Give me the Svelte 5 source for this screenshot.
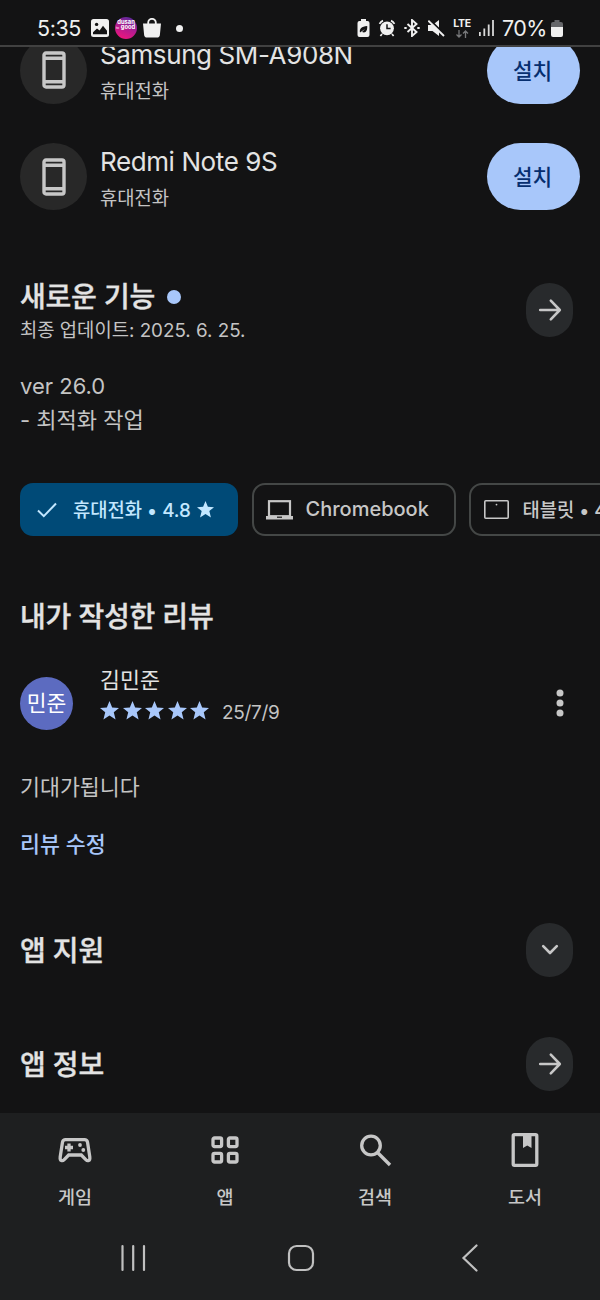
<script lang="ts">
	const devices = [
		{ name: 'Samsung SM-A908N', kind: '휴대전화' },
		{ name: 'Redmi Note 9S', kind: '휴대전화' }
	];

	const tabs = [
		{ id: 'games', label: '게임' },
		{ id: 'apps', label: '앱' },
		{ id: 'search', label: '검색' },
		{ id: 'books', label: '도서' }
	];

	const review = { author: '김민준', initials: '민준', rating: 5, date: '25/7/9', text: '기대가됩니다' };
</script>

{#snippet star(size: number)}
	<svg class="star" width={size} height={size} viewBox="0 0 20 20">
		<path d="M10 0l2.8 6.9 7.200.4-5.500 4.600 1.900 7.500L10 15.200l-6.400 4.200 1.900-7.500L0 7.300l7.200-.4z" />
	</svg>
{/snippet}

{#snippet arrow()}
	<svg class="line" width="24" height="24" viewBox="0 0 24 24">
		<path d="M2.2 12h19M12.8 2.700L21.800 12l-9 9.300" />
	</svg>
{/snippet}

<div class="screen">
	<header class="status">
		<span class="clock">5:35</span>
		<div class="notifications">
			<svg width="18" height="18" viewBox="0 0 18 18">
				<rect width="18" height="18" rx="2.5" fill="#f0f0f0" />
				<circle cx="5.6" cy="5.4" r="1.7" fill="#131314" />
				<path d="M2 13.2l4-3.6 2.6 2 3.4-4.8 4 5v3.5H2z" fill="#131314" />
			</svg>
			<svg width="22" height="22" viewBox="0 0 22 22">
				<defs>
					<linearGradient id="badge" x1="0.7" y1="0" x2="0.3" y2="1">
						<stop offset="0" stop-color="#5b2a9a" />
						<stop offset="0.5" stop-color="#b01c90" />
						<stop offset="1" stop-color="#f0157c" />
					</linearGradient>
				</defs>
				<circle cx="11" cy="11" r="11" fill="url(#badge)" />
				<text class="logo-text" x="11" y="7.2" text-anchor="middle">dusan</text>
				<text class="logo-text" x="13" y="12.2" text-anchor="middle">good</text>
				<text class="logo-tiny" x="1" y="11.500">to</text>
			</svg>
			<svg width="18" height="20" viewBox="0 0 18 20">
				<path d="M5.2 7V4.6a3.8 3.8 0 0 1 7.6 0V7" fill="none" stroke="#f0f0f0" stroke-width="1.8" />
				<path d="M0 5.6h18l-1.1 11.2a3 3 0 0 1-3 2.8H4.1a3 3 0 0 1-3-2.8z" fill="#f0f0f0" />
			</svg>
			<span class="more"></span>
		</div>
		<div class="system">
			<svg width="13" height="18" viewBox="0 0 13 18">
				<path d="M4 0h5v2h1.5a2 2 0 0 1 2 2v12a2 2 0 0 1-2 2h-8a2 2 0 0 1-2-2V4a2 2 0 0 1 2-2H4z" fill="#f0f0f0" />
				<path d="M3 13.6c-.8-4 1.5-6 7.2-6.600.3 4.500-1.200 7.600-5.200 6l3-3" fill="#131314" />
			</svg>
			<svg width="18" height="18" viewBox="0 0 18 18">
				<path d="M1.5 4.8A7 7 0 0 1 5 1.6M16.5 4.8A7 7 0 0 0 13 1.6M4 15l-1.6 2M14 15l1.6 2" fill="none" stroke="#f0f0f0" stroke-width="1.7" />
				<circle cx="9" cy="9.3" r="6.9" fill="#f0f0f0" />
				<path d="M9 5.2v4.400h3.600" fill="none" stroke="#131314" stroke-width="1.500" />
			</svg>
			<svg width="16" height="18" viewBox="0 0 16 18">
				<path d="M3.5 5l9 8L8 17V1l4.500 4-9 8M.3 9h2.400M13.300 9h2.400" fill="none" stroke="#f0f0f0" stroke-width="1.9" />
			</svg>
			<svg width="17" height="18" viewBox="0 0 17 18">
				<path d="M0 6h4.500l6.500-5v16l-6.500-5H0z" fill="#f0f0f0" />
				<path d="M1.500.5L17 16" stroke="#131314" stroke-width="2" />
				<path d="M.3 1.600L16 17" stroke="#f0f0f0" stroke-width="1.900" />
			</svg>
			<div class="network">
				<span>LTE</span>
				<svg width="13" height="8" viewBox="0 0 13 8">
					<path d="M3 0v7M.5 4.500L3 7l2.500-2.500M9.500 8V1M7 3.500L9.500 1 12 3.500" fill="none" stroke="#77787a" stroke-width="1.300" />
				</svg>
			</div>
			<svg width="15" height="16" viewBox="0 0 15 16">
				<path d="M.9 12v4M5.300 8.500V16M9.700 4.500V16M14 0v16" stroke="#d8d8d8" stroke-width="1.800" />
			</svg>
			<span class="percent">70%</span>
			<svg class="battery" width="12" height="17" viewBox="0 0 12 17">
				<path d="M3.5 0h5v2H10a2 2 0 0 1 2 2v3H0V4a2 2 0 0 1 2-2h1.500z" fill="#66676a" />
				<path d="M0 7h12v8a2 2 0 0 1-2 2H2a2 2 0 0 1-2-2z" fill="#f0f0f0" />
			</svg>
		</div>
	</header>

	<main>
		<ul class="devices">
			{#each devices as device}
				<li>
					<span class="device-icon">
						<svg width="24" height="38" viewBox="0 0 24 38">
							<rect x="2" y="2" width="20" height="34" rx="2" />
							<path d="M2 7.2h20M2 30.8h20" />
						</svg>
					</span>
					<div class="device-text">
						<span class="device-name">{device.name}</span>
						<span class="device-kind">{device.kind}</span>
					</div>
					<button class="install">설치</button>
				</li>
			{/each}
		</ul>

		<section class="news">
			<div class="news-head">
				<div>
					<h2>새로운 기능 <i class="unread"></i></h2>
					<p class="updated">최종 업데이트: 2025. 6. 25.</p>
				</div>
				<button class="round">{@render arrow()}</button>
			</div>
			<p class="changes">ver 26.0<br />- 최적화 작업</p>
		</section>

		<div class="chips">
			<button class="chip selected">
				<svg class="check" width="20" height="16" viewBox="0 0 20 16">
					<path d="M1 8.5l5.800 5.700L19 1.500" />
				</svg>
				<span>휴대전화 • 4.8</span>
				{@render star(17)}
			</button>
			<button class="chip laptop">
				<svg width="27" height="20" viewBox="0 0 27 20">
					<rect x="3" y="1.2" width="21" height="15" fill="none" stroke="currentColor" stroke-width="2.2" />
					<path d="M0 16h27v3.500H0z" fill="currentColor" />
					<path d="M11 17.200h5" stroke="#131314" stroke-width="1.200" />
				</svg>
				<span>Chromebook</span>
			</button>
			<button class="chip tablet">
				<svg width="25" height="19" viewBox="0 0 25 19">
					<rect x="0.8" y="0.8" width="23.4" height="17.4" rx="1" fill="none" stroke="currentColor" stroke-width="1.6" />
					<circle cx="12.500" cy="4.600" r="0.9" fill="currentColor" />
				</svg>
				<span>태블릿 • 4.6</span>
			</button>
		</div>

		<section class="mine">
			<h2>내가 작성한 리뷰</h2>
			<div class="review">
				<span class="avatar">{review.initials}</span>
				<div class="review-info">
					<span class="author">{review.author}</span>
					<div class="rating">
						{#each { length: review.rating } as _}
							{@render star(19)}
						{/each}
						<span class="date">{review.date}</span>
					</div>
				</div>
				<svg class="menu" width="8" height="28" viewBox="0 0 8 28">
					<circle cx="4" cy="4" r="3.5" />
					<circle cx="4" cy="14" r="3.5" />
					<circle cx="4" cy="24" r="3.5" />
				</svg>
			</div>
			<p class="review-text">{review.text}</p>
			<a class="edit" href="#edit">리뷰 수정</a>
		</section>

		<section class="link-row">
			<h2>앱 지원</h2>
			<button class="round">
				<svg class="line" width="18" height="12" viewBox="0 0 18 12">
					<path d="M2.2 2.200L9 9l6.800-6.800" />
				</svg>
			</button>
		</section>
		<section class="link-row">
			<h2>앱 정보</h2>
			<button class="round">{@render arrow()}</button>
		</section>
	</main>

	<footer>
		<nav class="tabs">
			{#each tabs as tab}
				<a href="#{tab.id}">
					<svg width="36" height="36" viewBox="0 0 36 36">
						{#if tab.id === 'games'}
							<path d="M8.5 7.700h19c1.700 0 2.600.8 3 2.400l2.300 15c.5 4-2.300 4.200-4 2.500L24.300 23H11.700l-4.500 4.600c-1.700 1.700-4.500 1.500-4-2.500l2.300-15c.4-1.600 1.300-2.400 3-2.400z" />
							<path d="M12 11.500v8M8 15.500h8" />
							<circle class="solid" cx="23" cy="13" r="1.9" />
							<circle class="solid" cx="26.300" cy="18" r="1.9" />
						{:else if tab.id === 'apps'}
							<rect x="6" y="6" width="8.600" height="8.600" rx="1.500" />
							<rect x="21.400" y="6" width="8.600" height="8.600" rx="1.500" />
							<rect x="6" y="21.400" width="8.600" height="8.600" rx="1.500" />
							<rect x="21.400" y="21.400" width="8.600" height="8.600" rx="1.500" />
						{:else if tab.id === 'search'}
							<circle cx="14" cy="13.500" r="9.300" />
							<path d="M20.500 20.500L33 33" />
						{:else}
							<rect x="6.200" y="2.700" width="23.600" height="30.600" rx="1.200" />
							<path class="solid" d="M16 3h8.500v13l-4.250-2.600L16 16z" />
						{/if}
					</svg>
					<span>{tab.label}</span>
				</a>
			{/each}
		</nav>
		<div class="keys">
			<svg width="26" height="28" viewBox="0 0 26 28">
				<path d="M2.5 2v24M13.200 2v24M24 2v24" />
			</svg>
			<svg class="home" width="28" height="28" viewBox="0 0 28 28">
				<rect x="2" y="2" width="24" height="24" rx="7.5" />
			</svg>
			<svg width="18" height="28" viewBox="0 0 18 28">
				<path d="M15.500 1.500L2.500 14l13 12.500" />
			</svg>
		</div>
	</footer>
</div>

<style>
	:global(body) {
		background: #131314;
	}

	.screen {
		display: flex;
		flex-direction: column;
		width: 600px;
		height: 1300px;
		overflow: hidden;
		background: #131314;
		color: #e3e3e3;
		font-family: Inter, 'Noto Sans CJK KR', sans-serif;
	}

	h2, p, ul {
		margin: 0;
		padding: 0;
		font-weight: inherit;
	}

	button {
		border: 0;
		padding: 0;
		font: inherit;
		color: inherit;
	}

	svg {
		display: block;
		flex: none;
	}

	/* Status bar */
	.status {
		display: flex;
		align-items: center;
		box-sizing: border-box;
		height: 47px;
		padding: 11px 37px 0;
		border-bottom: 2px solid #414141;
		color: #f0f0f0;
	}

	.clock {
		width: 54px;
		font-size: 21.5px;
		letter-spacing: -0.4px;
	}

	.notifications, .system {
		display: flex;
		align-items: center;
	}

	.notifications {
		gap: 6px;
	}

	.logo-text {
		font-size: 5.8px;
		font-weight: 700;
		fill: #fff;
	}

	.logo-tiny {
		font-size: 3.5px;
		fill: #fff;
	}

	.more {
		width: 7px;
		height: 7px;
		margin-left: 9px;
		border-radius: 50%;
		background: #f0f0f0;
	}

	.system {
		gap: 8px;
		margin-left: auto;
	}

	.network {
		display: flex;
		flex-direction: column;
		align-items: center;
		gap: 1px;
		width: 18px;
		font-size: 10.5px;
		font-weight: 700;
		line-height: 10px;
		letter-spacing: -0.3px;
	}

	.percent {
		width: 45px;
		font-size: 21.5px;
		letter-spacing: -0.6px;
	}

	.battery {
		margin-left: -4px;
	}

	main {
		flex: 1;
		min-height: 0;
		overflow: hidden;
	}

	/* Device list, scrolled under the status bar */
	.devices {
		margin-top: -30px;
		list-style: none;
	}

	.devices li {
		display: flex;
		align-items: center;
		height: 106.5px;
		padding: 0 20px;
	}

	.device-icon {
		display: grid;
		place-items: center;
		width: 67px;
		height: 67px;
		border-radius: 50%;
		background: #282828;
	}

	.device-icon svg {
		fill: none;
		stroke: #c7c7c7;
		stroke-width: 3.4;
	}

	.device-text {
		display: flex;
		flex: 1;
		flex-direction: column;
		padding: 7px 0 0 13px;
	}

	.device-name {
		font-size: 26px;
		line-height: 36px;
		letter-spacing: -0.4px;
	}

	.device-kind {
		font-size: 18.8px;
		line-height: 37px;
		color: #c4c4c4;
	}

	.install {
		width: 93px;
		height: 67px;
		padding: 0 2px 2px 0;
		border-radius: 34px;
		background: #a8c7fa;
		color: #062e6f;
		font-size: 21.3px;
		font-weight: 500;
	}

	/* Sections */
	h2 {
		font-size: 28px;
		font-weight: 500;
		line-height: 36px;
		letter-spacing: -0.2px;
		-webkit-text-stroke: 0.35px currentColor;
	}

	.news {
		padding: 49px 27px 0 20px;
	}

	.news-head {
		display: flex;
		justify-content: space-between;
	}

	.unread {
		display: inline-block;
		width: 14px;
		height: 14px;
		margin-left: 5px;
		border-radius: 50%;
		background: #a8c7fa;
		vertical-align: 3px;
	}

	.updated {
		font-size: 18.8px;
		line-height: 32px;
		color: #c4c4c4;
	}

	.round {
		display: grid;
		place-items: center;
		width: 47px;
		height: 54px;
		border-radius: 24px;
		background: #282a2c;
	}

	.news-head .round {
		margin-top: 4px;
	}

	.line {
		fill: none;
		stroke: #c7c7c7;
		stroke-width: 2.6;
		stroke-linecap: round;
		stroke-linejoin: round;
	}

	.changes {
		margin-top: 23px;
		font-size: 22px;
		line-height: 33.5px;
		color: #c4c4c4;
	}

	.chips {
		display: flex;
		gap: 13.5px;
		margin-top: 46px;
		padding-left: 20px;
	}

	.chip {
		display: flex;
		flex: none;
		align-items: center;
		box-sizing: border-box;
		height: 53px;
		border: 2px solid #444746;
		border-radius: 13px;
		background: none;
		color: #c7c7c7;
		font-size: 18.8px;
		font-weight: 500;
		white-space: nowrap;
	}

	.chip span {
		padding-bottom: 2px;
	}

	.chip.selected {
		width: 218px;
		padding-left: 17px;
		border: 0;
		background: #004a77;
		color: #c2e7ff;
	}

	.check {
		margin-right: 16px;
		fill: none;
		stroke: currentColor;
		stroke-width: 2;
	}

	.chip .star {
		margin-left: 6px;
		fill: currentColor;
	}

	.laptop {
		width: 204px;
		padding-left: 12px;
		gap: 13px;
	}

	.laptop span {
		font-size: 20px;
	}

	.tablet {
		width: 200px;
		padding-left: 12.5px;
		gap: 14px;
	}

	/* Own review */
	.mine {
		padding: 63px 20px 0;
	}

	.review {
		display: flex;
		align-items: flex-start;
		height: 78px;
		margin-top: 29px;
	}

	.avatar {
		width: 53px;
		height: 53px;
		margin-top: 13px;
		border-radius: 50%;
		background: #5c6bc0;
		color: #fff;
		font-size: 21.5px;
		line-height: 53px;
		text-align: center;
	}

	.review-info {
		display: flex;
		flex: 1;
		flex-direction: column;
		margin-left: 27px;
	}

	.author {
		font-size: 21.7px;
		line-height: 32px;
	}

	.rating {
		display: flex;
		align-items: center;
		gap: 3.6px;
		height: 28px;
	}

	.rating .star {
		fill: #a8c7fa;
	}

	.date {
		margin: 6px 0 0 9px;
		font-size: 19px;
		line-height: 28px;
		letter-spacing: -0.3px;
		color: #c4c4c4;
	}

	.menu {
		margin: 25px 16px 0 0;
		fill: #c7c7c7;
	}

	.review-text {
		margin-top: 29px;
		font-size: 21.7px;
		line-height: 32px;
		color: #c4c4c4;
	}

	.edit {
		display: block;
		margin-top: 25px;
		color: #a8c7fa;
		font-size: 21.7px;
		font-weight: 500;
		line-height: 32px;
		text-decoration: none;
	}

	.link-row {
		display: flex;
		align-items: center;
		justify-content: space-between;
		margin-top: 63px;
		padding: 0 27px 0 20px;
	}

	.link-row + .link-row {
		margin-top: 59.5px;
	}

	.link-row h2 {
		padding-top: 2px;
	}

	/* Bottom bars */
	footer {
		height: 187px;
		background: #1e1f20;
	}

	.tabs {
		display: grid;
		grid-template-columns: repeat(4, 1fr);
		padding-top: 19px;
	}

	.tabs a {
		display: flex;
		flex-direction: column;
		align-items: center;
		gap: 13px;
		color: #c7c7c7;
		font-size: 18.5px;
		font-weight: 500;
		line-height: 32px;
		text-decoration: none;
	}

	.tabs svg {
		fill: none;
		stroke: currentColor;
		stroke-width: 3.3;
	}

	.tabs .solid {
		fill: currentColor;
		stroke: none;
	}

	.keys {
		display: flex;
		justify-content: space-between;
		margin-top: 31px;
		padding: 0 121px 0 120px;
	}

	.keys svg {
		fill: none;
		stroke: #c0c0c0;
		stroke-width: 2.2;
		stroke-linecap: round;
	}

	.keys .home {
		margin-right: 6px;
	}
</style>
